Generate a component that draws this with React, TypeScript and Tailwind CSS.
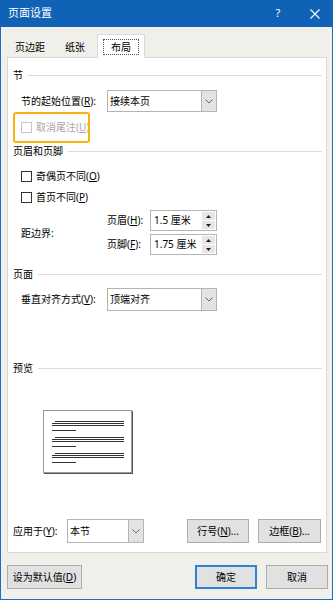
import React from "react";

const FONT = "font-['Noto_Sans','Noto_Sans_CJK_SC',sans-serif]";

function Acc({ pre, k, post = "" }: { pre: string; k: string; post?: string }) {
  return (
    <span className="whitespace-nowrap">
      {pre}(<span className="underline underline-offset-1">{k}</span>){post}
    </span>
  );
}

function Chevron() {
  return (
    <svg width="8" height="5" viewBox="0 0 8 5" fill="none">
      <path d="M0.5 0.5 L4 4 L7.5 0.5" stroke="#666" strokeWidth="1" />
    </svg>
  );
}

function Select({ value, w, h }: { value: string; w: string; h: string }) {
  return (
    <div className={`flex ${w} ${h} border border-[#b4b4b4] bg-white`}>
      <div className="flex flex-1 items-center pl-[2px] text-[10px] text-black">{value}</div>
      <div className="flex w-[15px] items-center justify-center border-l border-[#b4b4b4] bg-[#e3e3e3]">
        <Chevron />
      </div>
    </div>
  );
}

function Spin({ value }: { value: string }) {
  return (
    <div className="flex h-[21px] w-[67px] border border-[#b4b4b4] bg-white">
      <div className="flex flex-1 items-center pl-[3px] text-[10px] text-black">{value}</div>
      <div className="flex w-[14px] flex-col gap-px py-px pr-px">
        <div className="flex flex-1 items-center justify-center bg-[#e6e6e6]">
          <svg width="5" height="3" viewBox="0 0 5 3">
            <polygon points="0,3 2.5,0 5,3" fill="#222" />
          </svg>
        </div>
        <div className="flex flex-1 items-center justify-center bg-[#e6e6e6]">
          <svg width="5" height="3" viewBox="0 0 5 3">
            <polygon points="0,0 2.5,3 5,0" fill="#222" />
          </svg>
        </div>
      </div>
    </div>
  );
}

function Check({ children, disabled = false }: { children: React.ReactNode; disabled?: boolean }) {
  return (
    <div className={`flex h-[14px] items-center gap-[4px] text-[10px] ${disabled ? "text-[#a8a8a8]" : "text-black"}`}>
      <div className={`h-[11px] w-[11px] shrink-0 border bg-white ${disabled ? "border-[#c6c6c6]" : "border-[#333]"}`} />
      {children}
    </div>
  );
}

function Section({ title, mt }: { title: string; mt: string }) {
  return (
    <div className={`flex h-[14px] items-center gap-[5px] pl-[5px] pr-[4px] text-[10px] text-black ${mt}`}>
      <span className="whitespace-nowrap">{title}</span>
      <div className="h-px flex-1 bg-[#dcdcdc]" />
    </div>
  );
}

function Button({ children, w, primary = false }: { children: React.ReactNode; w: string; primary?: boolean }) {
  return (
    <div
      className={`flex h-[24px] ${w} items-center justify-center bg-[#e1e1e1] text-[10px] text-black ${
        primary ? "border-2 border-[#2f83d6]" : "border border-[#adadad]"
      }`}
    >
      {children}
    </div>
  );
}

function PreviewGroup() {
  return (
    <div className="flex flex-col">
      <div className="ml-[11px] mr-[7px] h-px bg-[#333]" />
      <div className="ml-[8px] mr-[7px] mt-[1px] h-px bg-[#333]" />
      <div className="ml-[8px] mr-[7px] mt-[1px] h-px bg-[#333]" />
      <div className="ml-[8px] mt-[4px] h-px w-[24px] bg-[#333]" />
    </div>
  );
}

export default function App() {
  return (
    <div className={`flex h-[600px] w-[333px] flex-col ${FONT}`}>
      <div className="flex h-[27px] items-center bg-[#0f62b5] text-white">
        <div className="flex-1 pl-[8px] text-[11px]">页面设置</div>
        <div className="w-[30px] text-center text-[11px]">?</div>
        <div className="ml-[7px] mr-[3px] flex w-[30px] justify-center">
          <svg width="10" height="10" viewBox="0 0 10 10">
            <path d="M0.5 0.5 L9.5 9.5 M9.5 0.5 L0.5 9.5" stroke="#fff" strokeWidth="1.1" />
          </svg>
        </div>
      </div>

      <div className="flex flex-1 flex-col border-x border-b border-[#1a6fc4] bg-[#f0efea]">
        <div className="flex h-[30px] items-end pl-[6px] text-[10px] text-black">
          <div className="flex h-[20px] w-[46px] items-center justify-center">页边距</div>
          <div className="flex h-[20px] w-[44px] items-center justify-center">纸张</div>
          <div className="relative z-10 -mb-px flex h-[24px] w-[48px] items-center justify-center border border-b-0 border-[#d9d9d9] bg-white">
            <span className="border border-dotted border-[#555] px-[7px] leading-[14px]">布局</span>
          </div>
        </div>

        <div className="ml-[6px] flex h-[496px] w-[320px] flex-col border border-[#d9d9d9] bg-white text-[10px] text-black">
          <Section title="节" mt="mt-[10px]" />
          <div className="mt-[8px] flex items-center pl-[13px]">
            <div className="w-[86px]">
              <Acc pre="节的起始位置" k="R" post=":" />
            </div>
            <Select value="接续本页" w="w-[110px]" h="h-[22px]" />
          </div>
          <div className="ml-[5px] flex h-[31px] w-[77px] items-center overflow-hidden rounded-[3px] border-2 border-[#f5b40f] pl-[6px]">
            <Check disabled>
              <Acc pre="取消尾注" k="U" />
            </Check>
          </div>

          <Section title="页眉和页脚" mt="mt-[1px]" />
          <div className="mt-[11px] pl-[13px]">
            <Check>
              <Acc pre="奇偶页不同" k="O" />
            </Check>
          </div>
          <div className="mt-[7px] pl-[13px]">
            <Check>
              <Acc pre="首页不同" k="P" />
            </Check>
          </div>
          <div className="mt-[6px] flex items-center pl-[13px]">
            <div className="w-[86px] pt-[2px]">距边界:</div>
            <div className="flex flex-col gap-[3px]">
              <div className="flex items-center">
                <div className="w-[43px]">
                  <Acc pre="页眉" k="H" post=":" />
                </div>
                <Spin value="1.5 厘米" />
              </div>
              <div className="flex items-center">
                <div className="w-[43px]">
                  <Acc pre="页脚" k="F" post=":" />
                </div>
                <Spin value="1.75 厘米" />
              </div>
            </div>
          </div>

          <Section title="页面" mt="mt-[12px]" />
          <div className="mt-[7px] flex items-center pl-[13px]">
            <div className="w-[86px]">
              <Acc pre="垂直对齐方式" k="V" post=":" />
            </div>
            <Select value="顶端对齐" w="w-[110px]" h="h-[23px]" />
          </div>

          <Section title="预览" mt="mt-[50px]" />
          <div className="ml-[35px] mt-[35px] flex h-[63px] w-[89px] flex-col gap-[6px] border border-[#9a9a9a] bg-white pt-[10px] shadow-[1px_1px_0_#555]">
            <PreviewGroup />
            <PreviewGroup />
            <PreviewGroup />
          </div>

          <div className="mt-auto mb-[9px] flex items-center pl-[5px] pr-[5px]">
            <div className="w-[54px]">
              <Acc pre="应用于" k="Y" post=":" />
            </div>
            <Select value="本节" w="w-[77px]" h="h-[24px]" />
            <div className="flex-1" />
            <Button w="w-[62px]">
              <Acc pre="行号" k="N" post="..." />
            </Button>
            <div className="w-[9px]" />
            <Button w="w-[63px]">
              <Acc pre="边框" k="B" post="..." />
            </Button>
          </div>
        </div>

        <div className="mt-[12px] flex items-center pl-[6px] pr-[4px]">
          <Button w="w-[75px]">
            <Acc pre="设为默认值" k="D" />
          </Button>
          <div className="flex-1" />
          <Button w="w-[62px]" primary>
            确定
          </Button>
          <div className="w-[9px]" />
          <Button w="w-[62px]">取消</Button>
        </div>
      </div>
    </div>
  );
}
